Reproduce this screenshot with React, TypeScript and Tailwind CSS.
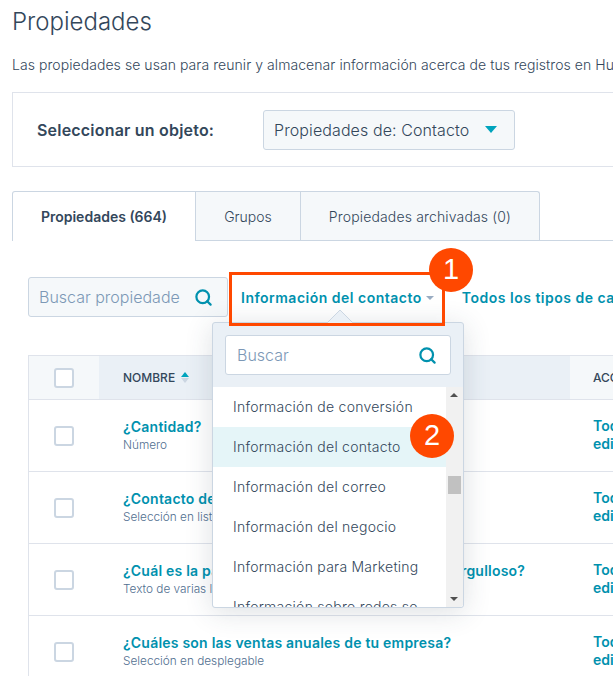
import { Search } from 'lucide-react';

const rows = [
  { name: '¿Cantidad?', type: 'Número' },
  { name: '¿Contacto de referencia de tu empresa?', type: 'Selección en lista' },
  { name: '¿Cuál es la parte de tu trabajo por la cual estás orgulloso?', type: 'Texto de varias líneas' },
  { name: '¿Cuáles son las ventas anuales de tu empresa?', type: 'Selección en desplegable' },
];

const options = [
  'Información de conversión',
  'Información del contacto',
  'Información del correo',
  'Información del negocio',
  'Información para Marketing',
  'Información sobre redes so',
];

function Checkbox() {
  return <div className="h-5 w-5 shrink-0 rounded-[3px] border-2 border-[#cbd6e2] bg-white" />;
}

function Badge({ n }: { n: number }) {
  return (
    <div className="flex h-11 w-11 items-center justify-center rounded-full bg-[#ff4800] font-['Liberation_Sans',sans-serif] text-[29px] text-white">
      {n}
    </div>
  );
}

function ObjectPicker() {
  return (
    <div className="mt-[17px] flex h-[75px] w-[700px] items-center border border-[#dfe3eb] pl-6">
      <span className="w-[226px] text-[16px] font-semibold tracking-[0.2px] text-[#33475b]">Seleccionar un objeto:</span>
      <div className="flex h-10 w-[252px] items-center justify-between rounded-[3px] border border-[#cbd6e2] bg-[#f5f8fa] pl-[10px] pr-[17px]">
        <span className="text-[16px] font-light tracking-[0.1px] text-[#33475b]">Propiedades de: Contacto</span>
        <span className="h-0 w-0 border-x-[6px] border-t-[7px] border-x-transparent border-t-[#00a4bd]" />
      </div>
    </div>
  );
}

function Tabs() {
  return (
    <div className="mt-6 flex h-[50px] w-[701px] border-b border-[#cbd6e2] text-[14px]">
      <div className="relative flex h-[50px] w-[184px] items-center justify-center rounded-tl-[3px] border border-b-0 border-[#cbd6e2] bg-white font-semibold text-[#33475b]">
        Propiedades (664)
      </div>
      <div className="flex h-[49px] w-[105px] items-center justify-center border-t border-r border-[#cbd6e2] bg-[#f5f8fa] font-light text-[#33475b]">
        Grupos
      </div>
      <div className="flex h-[49px] w-[239px] items-center justify-center rounded-tr-[3px] border-t border-r border-[#cbd6e2] bg-[#f5f8fa] font-light tracking-[0.15px] text-[#33475b]">
        Propiedades archivadas (0)
      </div>
    </div>
  );
}

function Filters() {
  return (
    <div className="mt-9 ml-4 flex h-10 items-center whitespace-nowrap">
      <div className="flex h-10 w-[200px] shrink-0 items-center justify-between rounded-[3px] border border-[#cbd6e2] bg-[#f5f8fa] pl-[10px] pr-[14px]">
        <span className="w-[141px] overflow-hidden text-[16px] font-light text-[#7c98b6]">Buscar propiedades</span>
        <Search size={19} strokeWidth={2.8} className="text-[#0091ae]" />
      </div>
      <div className="ml-[13px] flex shrink-0 items-center text-[14px] font-semibold tracking-[0.5px] text-[#0091ae]">
        Información del contacto
        <span className="ml-[4px] mt-[1px] h-0 w-0 border-x-[4px] border-t-[4px] border-x-transparent border-t-[#99acc2]" />
      </div>
      <span className="ml-[28px] shrink-0 text-[14px] font-semibold tracking-[0.5px] text-[#0091ae]">Todos los tipos de campo</span>
    </div>
  );
}

function PropertyTable() {
  return (
    <div className="mt-[38px] ml-4 w-[700px] border-l border-[#dfe3eb]">
      <div className="flex h-[45px] border-y border-[#dfe3eb] text-[12px] font-medium text-[#33475b]">
        <div className="flex w-[70px] items-center justify-center bg-[#f5f8fa]">
          <Checkbox />
        </div>
        <div className="flex w-[471px] items-center gap-[6px] bg-[#eaf0f6] pl-6">
          NOMBRE
          <span className="mb-[1px] flex flex-col gap-[1px]">
            <span className="h-0 w-0 border-x-[4px] border-b-[5px] border-x-transparent border-b-[#00a4bd]" />
            <span className="h-0 w-0 border-x-[4px] border-t-[5px] border-x-transparent border-t-[#cbd6e2]" />
          </span>
        </div>
        <div className="flex flex-1 items-center bg-[#f5f8fa] pl-[23px]">ACCESO</div>
      </div>
      {rows.map((row) => (
        <div key={row.name} className="flex h-[72px] border-b border-[#dfe3eb]">
          <div className="flex w-[70px] items-center justify-center">
            <Checkbox />
          </div>
          <div className="flex w-[471px] flex-col justify-center pl-6 whitespace-nowrap">
            <span className="text-[14px] leading-[18px] font-semibold tracking-[0.22px] text-[#0091ae]">{row.name}</span>
            <span className="mt-[1px] text-[11.8px] leading-[17px] font-light text-[#516f90]">{row.type}</span>
          </div>
          <div className="w-[120px] pl-[23px] pt-[17px] text-[14px] leading-[18px] font-semibold text-[#0091ae]">
            Todos pueden editar
          </div>
        </div>
      ))}
    </div>
  );
}

function Dropdown() {
  return (
    <div className="absolute left-[212px] top-[322px] h-[286px] w-[252px] rounded-[3px] border border-[#cbd6e2] bg-[#eaf0f6] shadow-[0_4px_28px_rgba(45,62,80,0.16)]">
      <svg className="absolute -top-[13px] left-[113px]" width="28" height="14" viewBox="0 0 28 14">
        <path d="M0 14 L14 0 L28 14" fill="#eaf0f6" stroke="#cbd6e2" />
      </svg>
      <div className="absolute left-3 top-3 flex h-10 w-[226px] items-center justify-between rounded-[3px] border border-[#cbd6e2] bg-white pl-[11px] pr-[13px]">
        <span className="text-[16px] font-light text-[#7c98b6]">Buscar</span>
        <Search size={19} strokeWidth={2.8} className="text-[#0091ae]" />
      </div>
      <div className="absolute left-0 right-0 bottom-0 top-[64px] flex overflow-hidden rounded-b-[3px] bg-white">
        <div className="min-w-0 flex-1 overflow-hidden">
          {options.map((o, i) => (
            <div
              key={o}
              className={`flex h-10 shrink-0 items-center pl-5 pb-[1px] text-[14px] font-light tracking-[0.25px] whitespace-nowrap text-[#33475b] ${i === 1 ? 'bg-[#e5f5f8]' : ''}`}
            >
              {o}
            </div>
          ))}
        </div>
        <div className="relative w-[17px] shrink-0 bg-[#f1f1f1]">
          <span className="absolute left-[4px] top-[6px] h-0 w-0 border-x-[4px] border-b-[4px] border-x-transparent border-b-[#505050]" />
          <div className="absolute left-[2px] top-[89px] h-[18px] w-[13px] bg-[#c1c1c1]" />
          <span className="absolute bottom-[6px] left-[4px] h-0 w-0 border-x-[4px] border-t-[4px] border-x-transparent border-t-[#505050]" />
        </div>
      </div>
    </div>
  );
}

export default function App() {
  return (
    <div className="relative h-[676px] w-[613px] overflow-hidden bg-white pl-3 font-['Inter',sans-serif]">
      <h1 className="pt-[5px] text-[24px] leading-[34px] font-light text-[#33475b]">Propiedades</h1>
      <p className="mt-4 text-[14px] leading-5 font-light tracking-[0.06px] whitespace-nowrap text-[#33475b]">
        Las propiedades se usan para reunir y almacenar información acerca de tus registros en HubSpot.
      </p>
      <ObjectPicker />
      <Tabs />
      <Filters />
      <PropertyTable />

      {/* overlays */}
      <Dropdown />
      <div className="absolute left-[229px] top-[272px] h-[54px] w-[216px] border-[3px] border-[#ff4800]" />
      <div className="absolute left-[429px] top-[248px]">
        <Badge n={1} />
      </div>
      <div className="absolute left-[410px] top-[414px]">
        <Badge n={2} />
      </div>
    </div>
  );
}
